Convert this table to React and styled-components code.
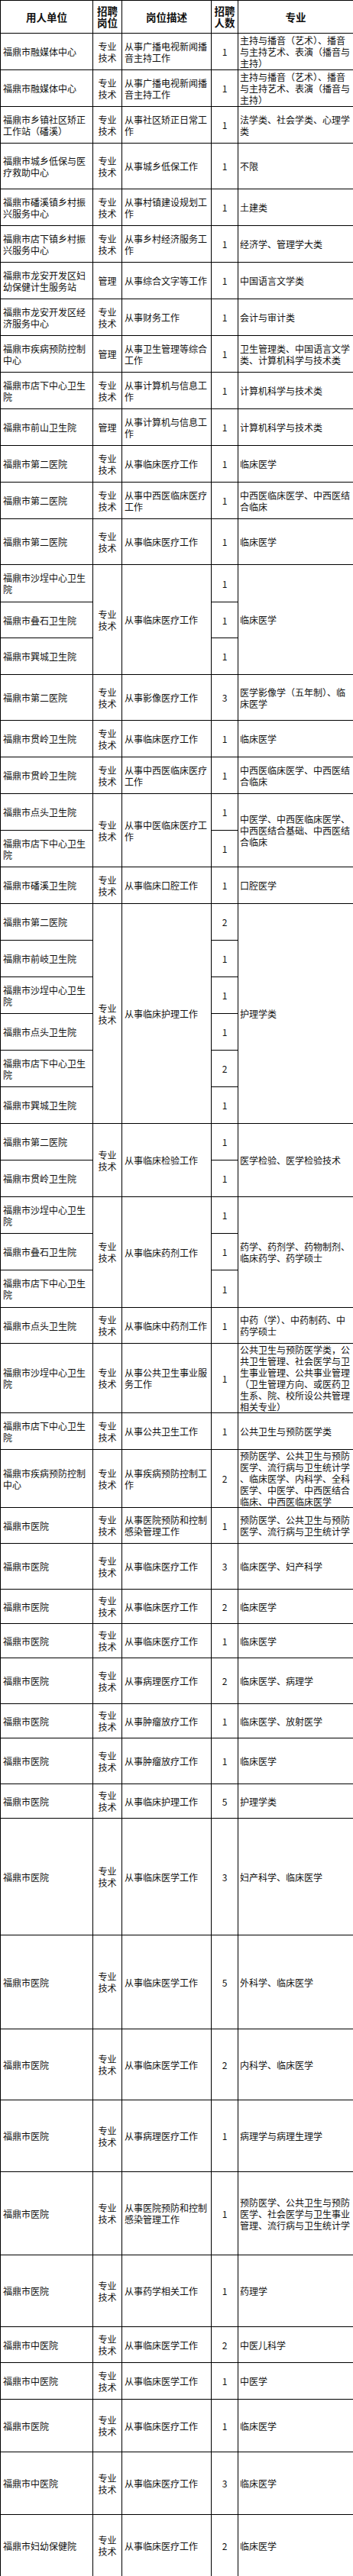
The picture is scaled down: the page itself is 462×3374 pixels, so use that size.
import React from "react";
import styled, { createGlobalStyle } from "styled-components";

const GlobalStyle = createGlobalStyle`
  body {
    margin: 0;
    background: #fff;
  }
`;

const Sheet = styled.table`
  width: 462px;
  table-layout: fixed;
  border-collapse: collapse;
  font-family: "Noto Sans CJK SC", "Noto Sans", sans-serif;
  font-size: 12px;
  line-height: 15px;
  color: #111;
`;

const HeadCell = styled.th`
  border: 1px solid #000;
  padding: 0 2px;
  font-size: 13.5px;
  font-weight: 700;
  text-align: center;
  vertical-align: middle;
`;

const Row = styled.tr`
  height: ${(p) => p.$h}px;
`;

const BaseCell = styled.td`
  border: 1px solid #000;
  vertical-align: middle;
  line-break: anywhere;
  word-break: break-all;
`;

const UnitCell = styled(BaseCell)`
  padding: 0 0 0 3px;
`;

const PostCell = styled(BaseCell)`
  padding: 0 3px;
  text-align: center;
`;

const DescCell = styled(BaseCell)`
  padding: 0 0 0 3px;
`;

const CountCell = styled(BaseCell)`
  padding: 0;
  text-align: center;
`;

const MajorCell = styled(BaseCell)`
  padding: 0 0 0 2px;
`;

const ZY = "专业技术";
const GL = "管理";
const LC = "从事临床医疗工作";

const groups = [
  { post: ZY, desc: "从事广播电视新闻播音主持工作", major: "主持与播音（艺术）、播音与主持艺术、表演（播音与主持）", units: [["福鼎市融媒体中心", 1, 48]] },
  { post: ZY, desc: "从事广播电视新闻播音主持工作", major: "主持与播音（艺术）、播音与主持艺术、表演（播音与主持）", units: [["福鼎市融媒体中心", 1, 48]] },
  { post: ZY, desc: "从事社区矫正日常工作", major: "法学类、社会学类、心理学类", units: [["福鼎市乡镇社区矫正工作站（磻溪）", 1, 48]] },
  { post: ZY, desc: "从事城乡低保工作", major: "不限", units: [["福鼎市城乡低保与医疗救助中心", 1, 60]] },
  { post: ZY, desc: "从事村镇建设规划工作", major: "土建类", units: [["福鼎市磻溪镇乡村振兴服务中心", 1, 48]] },
  { post: ZY, desc: "从事乡村经济服务工作", major: "经济学、管理学大类", units: [["福鼎市店下镇乡村振兴服务中心", 1, 48]] },
  { post: GL, desc: "从事综合文字等工作", major: "中国语言文学类", units: [["福鼎市龙安开发区妇幼保健计生服务站", 1, 48]] },
  { post: ZY, desc: "从事财务工作", major: "会计与审计类", units: [["福鼎市龙安开发区经济服务中心", 1, 48]] },
  { post: GL, desc: "从事卫生管理等综合工作", major: "卫生管理类、中国语言文学类、计算机科学与技术类", units: [["福鼎市疾病预防控制中心", 1, 48]] },
  { post: ZY, desc: "从事计算机与信息工作", major: "计算机科学与技术类", units: [["福鼎市店下中心卫生院", 1, 48]] },
  { post: GL, desc: "从事计算机与信息工作", major: "计算机科学与技术类", units: [["福鼎市前山卫生院", 1, 48]] },
  { post: ZY, desc: LC, major: "临床医学", units: [["福鼎市第二医院", 1, 48]] },
  { post: ZY, desc: "从事中西医临床医疗工作", major: "中西医临床医学、中西医结合临床", units: [["福鼎市第二医院", 1, 48]] },
  { post: ZY, desc: LC, major: "临床医学", units: [["福鼎市第二医院", 1, 60]] },
  {
    post: ZY, desc: LC, major: "临床医学",
    units: [["福鼎市沙埕中心卫生院", 1, 49], ["福鼎市叠石卫生院", 1, 47], ["福鼎市巽城卫生院", 1, 48]],
  },
  { post: ZY, desc: "从事影像医疗工作", major: "医学影像学（五年制）、临床医学", units: [["福鼎市第二医院", 3, 60]] },
  { post: ZY, desc: LC, major: "临床医学", units: [["福鼎市贯岭卫生院", 1, 48]] },
  { post: ZY, desc: "从事中西医临床医疗工作", major: "中西医临床医学、中西医结合临床", units: [["福鼎市贯岭卫生院", 1, 48]] },
  {
    post: ZY, desc: "从事中医临床医疗工作", major: "中医学、中西医临床医学、中西医结合基础、中西医结合临床",
    units: [["福鼎市点头卫生院", 1, 48], ["福鼎市店下中心卫生院", 1, 48]],
  },
  { post: ZY, desc: "从事临床口腔工作", major: "口腔医学", units: [["福鼎市磻溪卫生院", 1, 48]] },
  {
    post: ZY, desc: "从事临床护理工作", major: "护理学类",
    units: [
      ["福鼎市第二医院", 2, 48],
      ["福鼎市前岐卫生院", 1, 48],
      ["福鼎市沙埕中心卫生院", 1, 48],
      ["福鼎市点头卫生院", 1, 48],
      ["福鼎市店下中心卫生院", 2, 48],
      ["福鼎市巽城卫生院", 1, 48],
    ],
  },
  {
    post: ZY, desc: "从事临床检验工作", major: "医学检验、医学检验技术",
    units: [["福鼎市第二医院", 1, 48], ["福鼎市贯岭卫生院", 1, 48]],
  },
  {
    post: ZY, desc: "从事临床药剂工作", major: "药学、药剂学、药物制剂、临床药学、药学硕士",
    units: [["福鼎市沙埕中心卫生院", 1, 48], ["福鼎市叠石卫生院", 1, 48], ["福鼎市店下中心卫生院", 1, 49]],
  },
  { post: ZY, desc: "从事临床中药剂工作", major: "中药（学）、中药制药、中药学硕士", units: [["福鼎市点头卫生院", 1, 47]] },
  {
    post: ZY, desc: "从事公共卫生事业服务工作",
    major: "公共卫生与预防医学类，公共卫生管理、社会医学与卫生事业管理、公共事业管理（卫生管理方向、或医药卫生系、院、校所设公共管理相关专业）",
    units: [["福鼎市沙埕中心卫生院", 1, 90]],
  },
  { post: ZY, desc: "从事公共卫生工作", major: "公共卫生与预防医学类", units: [["福鼎市店下中心卫生院", 1, 48]] },
  {
    post: ZY, desc: "从事疾病预防控制工作",
    major: "预防医学、公共卫生与预防医学、流行病与卫生统计学、临床医学、内科学、全科医学、中医学、中西医结合临床、中西医临床医学",
    units: [["福鼎市疾病预防控制中心", 2, 76]],
  },
  { post: ZY, desc: "从事医院预防和控制感染管理工作", major: "预防医学、公共卫生与预防医学、流行病与卫生统计学", units: [["福鼎市医院", 1, 47]] },
  { post: ZY, desc: LC, major: "临床医学、妇产科学", units: [["福鼎市医院", 3, 60]] },
  { post: ZY, desc: LC, major: "临床医学", units: [["福鼎市医院", 2, 45]] },
  { post: ZY, desc: LC, major: "临床医学", units: [["福鼎市医院", 1, 45]] },
  { post: ZY, desc: "从事病理医疗工作", major: "临床医学、病理学", units: [["福鼎市医院", 2, 60]] },
  { post: ZY, desc: "从事肿瘤放疗工作", major: "临床医学、放射医学", units: [["福鼎市医院", 1, 45]] },
  { post: ZY, desc: "从事肿瘤放疗工作", major: "临床医学", units: [["福鼎市医院", 1, 60]] },
  { post: ZY, desc: "从事临床护理工作", major: "护理学类", units: [["福鼎市医院", 5, 45]] },
  { post: ZY, desc: "从事临床医学工作", major: "妇产科学、临床医学", units: [["福鼎市医院", 3, 153]] },
  { post: ZY, desc: "从事临床医学工作", major: "外科学、临床医学", units: [["福鼎市医院", 5, 123]] },
  { post: ZY, desc: "从事临床医学工作", major: "内科学、临床医学", units: [["福鼎市医院", 2, 93]] },
  { post: ZY, desc: "从事病理医疗工作", major: "病理学与病理生理学", units: [["福鼎市医院", 1, 94]] },
  {
    post: ZY, desc: "从事医院预防和控制感染管理工作",
    major: "预防医学、公共卫生与预防医学、社会医学与卫生事业管理、流行病与卫生统计学",
    units: [["福鼎市医院", 1, 109]],
  },
  { post: ZY, desc: "从事药学相关工作", major: "药理学", units: [["福鼎市医院", 1, 94]] },
  { post: ZY, desc: "从事临床医学工作", major: "中医儿科学", units: [["福鼎市中医院", 2, 47]] },
  { post: ZY, desc: "从事临床医学工作", major: "中医学", units: [["福鼎市中医院", 1, 48]] },
  { post: ZY, desc: LC, major: "临床医学", units: [["福鼎市医院", 1, 69]] },
  { post: ZY, desc: LC, major: "临床医学", units: [["福鼎市中医院", 3, 82]] },
  { post: ZY, desc: LC, major: "临床医学", units: [["福鼎市妇幼保健院", 2, 81]] },
];

const Group = ({ group }) => {
  const span = group.units.length;
  return group.units.map(([name, count, h], i) => (
    <Row key={i} $h={h}>
      <UnitCell>{name}</UnitCell>
      {i === 0 && <PostCell rowSpan={span}>{group.post}</PostCell>}
      {i === 0 && <DescCell rowSpan={span}>{group.desc}</DescCell>}
      <CountCell>{count}</CountCell>
      {i === 0 && <MajorCell rowSpan={span}>{group.major}</MajorCell>}
    </Row>
  ));
};

export default function App() {
  return (
    <>
      <GlobalStyle />
      <Sheet>
        <colgroup>
          <col style={{ width: 121 }} />
          <col style={{ width: 38 }} />
          <col style={{ width: 117 }} />
          <col style={{ width: 35 }} />
          <col style={{ width: 151 }} />
        </colgroup>
        <thead>
          <Row $h={43}>
            <HeadCell>用人单位</HeadCell>
            <HeadCell>招聘岗位</HeadCell>
            <HeadCell>岗位描述</HeadCell>
            <HeadCell>招聘人数</HeadCell>
            <HeadCell>专业</HeadCell>
          </Row>
        </thead>
        <tbody>
          {groups.map((g, i) => (
            <Group key={i} group={g} />
          ))}
        </tbody>
      </Sheet>
    </>
  );
}
